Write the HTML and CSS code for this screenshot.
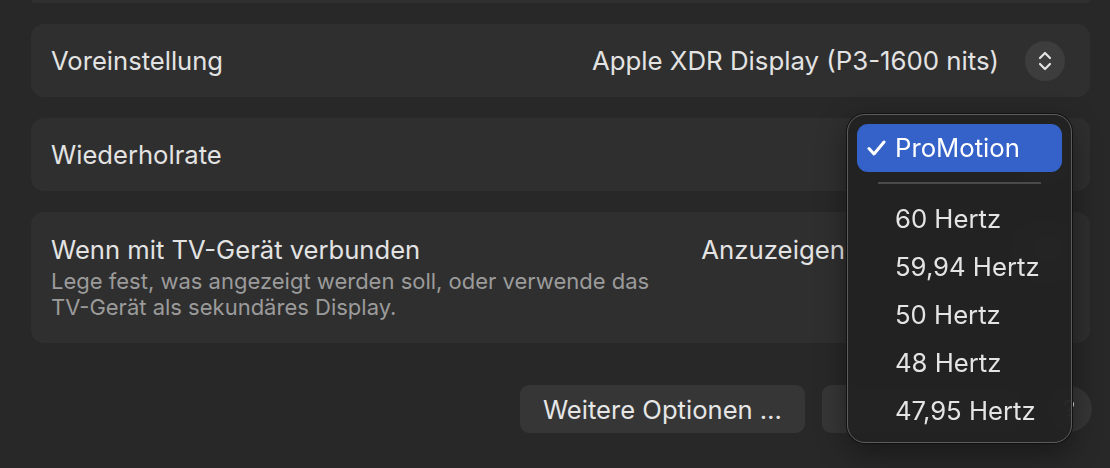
FILE: index.html
```html
<!DOCTYPE html>
<html lang="de">
<head>
<meta charset="utf-8">
<link rel="stylesheet" href="styles.css">
</head>
<body>
<div class="page">
  <div class="card card-partial"></div>
  <div class="card row">
    <span class="label">Voreinstellung</span>
    <div class="control">
      <span class="value">Apple XDR Display (P3-1600 nits)</span>
      <span class="stepper"><svg width="14" height="20" viewBox="0 0 14 20"><path d="M2 7 L7 2 L12 7 M2 13 L7 18 L12 13" fill="none" stroke="#e4e4e4" stroke-width="2.2" stroke-linecap="round" stroke-linejoin="round"/></svg></span>
    </div>
  </div>
  <div class="card row">
    <span class="label">Wiederholrate</span>
    <div class="control">
      <span class="placeholder"></span>
      <span class="stepper"><svg width="14" height="20" viewBox="0 0 14 20"><path d="M2 7 L7 2 L12 7 M2 13 L7 18 L12 13" fill="none" stroke="#e4e4e4" stroke-width="2.2" stroke-linecap="round" stroke-linejoin="round"/></svg></span>
    </div>
  </div>
  <div class="card row tall">
    <div class="textblock">
      <span class="label">Wenn mit TV-Gerät verbunden</span>
      <span class="desc">Lege fest, was angezeigt werden soll, oder verwende das<br>TV-Gerät als sekundäres Display.</span>
    </div>
    <div class="control top">
      <span class="value">Anzuzeigen</span>
      <span class="placeholder wide"></span>
      <span class="stepper"><svg width="14" height="20" viewBox="0 0 14 20"><path d="M2 7 L7 2 L12 7 M2 13 L7 18 L12 13" fill="none" stroke="#e4e4e4" stroke-width="2.2" stroke-linecap="round" stroke-linejoin="round"/></svg></span>
    </div>
  </div>
  <div class="buttons">
    <button class="btn">Weitere Optionen …</button>
    <button class="btn blank"></button>
    <button class="help"><svg width="14" height="20" viewBox="0 0 14 20"><path d="M3 6 C3 3.5 5 2 7 2 C9.5 2 11 3.6 11 5.6 C11 8.5 7 8.6 7 12" fill="none" stroke="#e6e6e6" stroke-width="2.2" stroke-linecap="round"/><circle cx="7" cy="16.5" r="1.4" fill="#e6e6e6"/></svg></button>
  </div>

  <div class="menu">
    <div class="item selected">
      <svg class="check" width="19" height="16" viewBox="0 0 19 16"><path d="M2 8.5 L7 14 L17 2" fill="none" stroke="#ffffff" stroke-width="3" stroke-linecap="round" stroke-linejoin="round"/></svg>
      <span>ProMotion</span>
    </div>
    <div class="sep"></div>
    <div class="item">60 Hertz</div>
    <div class="item">59,94 Hertz</div>
    <div class="item">50 Hertz</div>
    <div class="item">48 Hertz</div>
    <div class="item">47,95 Hertz</div>
  </div>
</div>
</body>
</html>
```

FILE: styles.css
```css
* { box-sizing: border-box; }
html, body {
  margin: 0;
  height: 100%;
  background: #282828;
  overflow: hidden;
}
body {
  font-family: Inter, "Noto Sans", sans-serif;
  color: #e3e3e3;
  -webkit-font-smoothing: antialiased;
}
.page {
  position: relative;
  height: 468px;
  padding: 0 20px 0 31px;
  display: flex;
  flex-direction: column;
  gap: 21px;
}
.card {
  background: #2f2f2f;
  border-radius: 13px;
}
.card-partial {
  height: 3px;
  border-radius: 0 0 13px 13px;
}
.row {
  height: 73px;
  display: flex;
  align-items: center;
  justify-content: space-between;
  padding: 0 25px 0 20px;
}
.row.tall {
  height: 131px;
  align-items: flex-start;
  padding-top: 22px;
}
.label {
  font-size: 25.6px;
}
.textblock {
  display: flex;
  flex-direction: column;
  gap: 2px;
}
.desc {
  font-size: 22px;
  line-height: 26px;
  color: #9b9b9b;
  margin-top: 1px;
}
.control {
  display: flex;
  align-items: center;
  gap: 26px;
}
.control.top {
  margin-top: -5px;
  gap: 16px;
}
.value {
  font-size: 25.8px;
}
.placeholder {
  width: 140px;
  height: 30px;
}
.placeholder.wide {
  width: 148px;
}
.stepper {
  width: 40px;
  height: 40px;
  border-radius: 50%;
  background: #3d3d3d;
  display: flex;
  align-items: center;
  justify-content: center;
}
.buttons {
  margin-top: 21px;
  display: flex;
  justify-content: flex-end;
  align-items: center;
  gap: 17px;
  margin-right: -2px;
}
.btn {
  height: 48px;
  padding: 0 23px;
  border: none;
  border-radius: 9px;
  background: #363636;
  color: #e6e6e6;
  font-family: Inter, "Noto Sans", sans-serif;
  font-size: 25.6px;
}
.btn.blank {
  width: 207px;
}
.help {
  width: 46px;
  height: 46px;
  border: none;
  border-radius: 50%;
  background: #363636;
  display: flex;
  align-items: center;
  justify-content: center;
  padding: 0;
}
.menu {
  position: absolute;
  left: 847px;
  top: 114px;
  width: 225px;
  height: 329px;
  border-radius: 18px;
  background: rgba(34, 34, 34, 0.92);
  backdrop-filter: blur(14px);
  border: 1.5px solid #5c5c5c;
  box-shadow: 0 0 0 1px #111, 0 10px 30px rgba(0,0,0,0.4);
  padding: 8.5px 9px;
}
.item {
  height: 48px;
  display: flex;
  align-items: center;
  padding-left: 38px;
  font-size: 25.7px;
  color: #e4e4e4;
}
.item.selected {
  background: #3462c9;
  border-radius: 11px;
  color: #ffffff;
  padding-left: 10px;
  gap: 9px;
}
.sep {
  height: 23px;
  display: flex;
  align-items: center;
  padding: 0 21px;
}
.sep::before {
  content: "";
  display: block;
  width: 100%;
  height: 2px;
  background: #4a4a4a;
}
```
